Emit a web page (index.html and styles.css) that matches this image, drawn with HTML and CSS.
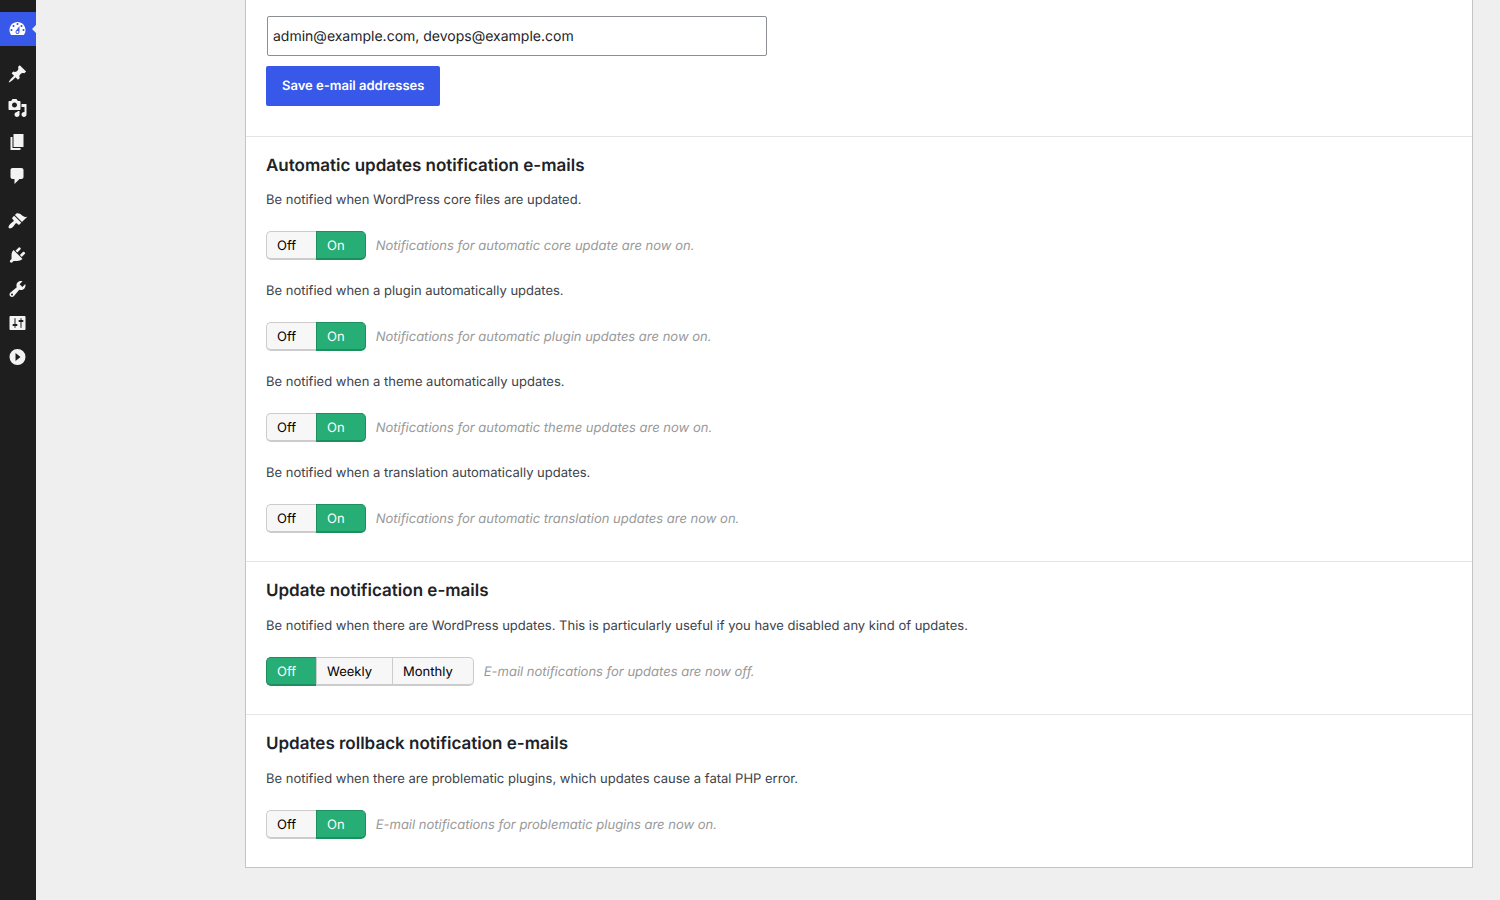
FILE: index.html
```
<!DOCTYPE html>
<html lang="en">
<head>
    <meta charset="UTF-8">
    <meta name="viewport" content="width=device-width, initial-scale=1.0">
    <title>Update notifications</title>
    <link rel="stylesheet" href="styles.css">
</head>
<body>

    <nav class="admin-menu" aria-label="Main menu">
        <a href="#" class="menu-item current" aria-label="Dashboard">
            <svg viewBox="0 0 20 20"><path d="M3.76 16h12.48c1.1-1.37 1.76-3.11 1.76-5 0-4.42-3.58-8-8-8s-8 3.58-8 8c0 1.89.66 3.63 1.76 5zM10 4c.55 0 1 .45 1 1s-.45 1-1 1-1-.45-1-1 .45-1 1-1zM6 6c.55 0 1 .45 1 1s-.45 1-1 1-1-.45-1-1 .45-1 1-1zm8 0c.55 0 1 .45 1 1s-.45 1-1 1-1-.45-1-1 .45-1 1-1zm-5.37 5.55L12 7v6c0 1.1-.9 2-2 2s-2-.9-2-2c0-.57.24-1.08.63-1.45zM4 10c.55 0 1 .45 1 1s-.45 1-1 1-1-.45-1-1 .45-1 1-1zm12 0c.55 0 1 .45 1 1s-.45 1-1 1-1-.45-1-1 .45-1 1-1zm-5 3c0-.55-.45-1-1-1s-1 .45-1 1 .45 1 1 1 1-.45 1-1z"/></svg>
        </a>
        <div class="menu-separator"></div>
        <a href="#" class="menu-item" aria-label="Posts">
            <svg viewBox="0 0 20 20"><path d="M10.44 3.02l1.82-1.82 6.36 6.35-1.83 1.82c-1.05-.68-2.48-.57-3.41.36l-.75.75c-.92.93-1.04 2.35-.35 3.41l-1.83 1.82-2.41-2.41-2.8 2.79c-.42.42-3.38 2.71-3.8 2.29s1.86-3.39 2.28-3.81l2.79-2.79L4.1 9.36l1.83-1.82c1.05.69 2.48.57 3.4-.36l.75-.75c.93-.92 1.05-2.35.36-3.41z"/></svg>
        </a>
        <a href="#" class="menu-item" aria-label="Media">
            <svg viewBox="0 0 20 20"><path d="M13 11V4c0-.55-.45-1-1-1h-1.67L9 1H5L3.67 3H2c-.55 0-1 .45-1 1v7c0 .55.45 1 1 1h10c.55 0 1-.45 1-1zM7 4.5c1.38 0 2.5 1.12 2.5 2.5S8.38 9.5 7 9.5 4.5 8.38 4.5 7 5.62 4.5 7 4.5zM14 6h5v10.5c0 1.38-1.12 2.5-2.5 2.5S14 17.88 14 16.5s1.12-2.5 2.5-2.5c.17 0 .34.02.5.05V9h-3V6zm-4 8.05V13h2v3.5c0 1.38-1.12 2.5-2.5 2.5S7 17.88 7 16.5 8.12 14 9.5 14c.17 0 .34.02.5.05z"/></svg>
        </a>
        <a href="#" class="menu-item" aria-label="Pages">
            <svg viewBox="0 0 20 20"><path d="M6 15V2h10v13H6zm-1 1h8v2H3V5h2v11z"/></svg>
        </a>
        <a href="#" class="menu-item" aria-label="Comments">
            <svg viewBox="0 0 20 20"><path d="M5 2h9c1.1 0 2 .9 2 2v7c0 1.1-.9 2-2 2h-2l-5 5v-5H5c-1.1 0-2-.9-2-2V4c0-1.1.9-2 2-2z"/></svg>
        </a>
        <div class="menu-separator"></div>
        <a href="#" class="menu-item" aria-label="Appearance">
            <svg viewBox="0 0 20 20"><path d="M14.48 11.06L7.41 3.99l1.5-1.5c.5-.56 2.3-.47 3.51.32 1.21.8 1.43 1.28 2.91 2.1 1.18.64 2.45 1.26 4.45.85zm-.71.71L6.7 4.7 4.93 6.47c-.39.39-.39 1.02 0 1.41l1.06 1.06c.39.39.39 1.03 0 1.42-.6.6-1.43 1.11-2.21 1.69-.35.26-.7.53-1.01.84C1.43 14.23.4 16.08 1.4 17.07c.99 1 2.84-.03 4.18-1.36.31-.31.58-.66.85-1.02.57-.78 1.08-1.61 1.69-2.21.39-.39 1.02-.39 1.41 0l1.06 1.06c.39.39 1.02.39 1.41 0z"/></svg>
        </a>
        <a href="#" class="menu-item" aria-label="Plugins">
            <svg viewBox="0 0 20 20"><path d="M13.11 4.36L9.87 7.6 8 5.73l3.24-3.24c.35-.34 1.05-.2 1.56.32.52.51.66 1.21.31 1.55zm-8 1.77l.91-1.12 9.01 9.01-1.19.84c-.71.71-2.63 1.16-3.82 1.16H6.14L4.9 17.26c-.59.59-1.54.59-2.12 0-.59-.58-.59-1.53 0-2.12l1.24-1.24v-3.88c0-1.13.4-3.19 1.09-3.89zm7.26 3.97l3.24-3.24c.34-.35 1.04-.21 1.55.31.52.51.66 1.21.31 1.55l-3.24 3.25z"/></svg>
        </a>
        <a href="#" class="menu-item" aria-label="Tools">
            <svg viewBox="0 0 20 20"><path d="M16.68 9.77c-1.34 1.34-3.3 1.67-4.95.99l-5.41 6.52c-.99.99-2.59.99-3.58 0s-.99-2.59 0-3.57l6.52-5.42c-.68-1.65-.35-3.61.99-4.95 1.28-1.28 3.12-1.62 4.72-1.06l-2.89 2.89 2.82 2.82 2.86-2.87c.53 1.58.18 3.39-1.08 4.65zM3.81 16.21c.4.39 1.04.39 1.43 0 .4-.4.4-1.04 0-1.43-.39-.4-1.03-.4-1.43 0-.39.39-.39 1.03 0 1.43z"/></svg>
        </a>
        <a href="#" class="menu-item" aria-label="Settings">
            <svg viewBox="0 0 20 20"><path d="M18 16V4c0-.55-.45-1-1-1H3c-.55 0-1 .45-1 1v12c0 .55.45 1 1 1h14c.55 0 1-.45 1-1zM8 11h1c.55 0 1 .45 1 1s-.45 1-1 1H8v1.5c0 .28-.22.5-.5.5s-.5-.22-.5-.5V13H6c-.55 0-1-.45-1-1s.45-1 1-1h1V5.5c0-.28.22-.5.5-.5s.5.22.5.5V11zm5-2h-1c-.55 0-1-.45-1-1s.45-1 1-1h1V5.5c0-.28.22-.5.5-.5s.5.22.5.5V7h1c.55 0 1 .45 1 1s-.45 1-1 1h-1v5.5c0 .28-.22.5-.5.5s-.5-.22-.5-.5V9z"/></svg>
        </a>
        <button type="button" class="menu-item" aria-label="Expand menu">
            <svg viewBox="0 0 20 20"><path fill-rule="evenodd" d="M10 2a8 8 0 1 0 0 16 8 8 0 0 0 0-16zM8 14V6l5 4z"/></svg>
        </button>
    </nav>

    <main class="content">
        <form class="panel">
            <section class="email-section">
                <input type="text" id="emails" class="email-input" aria-label="E-mail addresses" value="admin@example.com, devops@example.com">
                <button type="submit" class="save-btn">Save e-mail addresses</button>
            </section>

            <section class="section section-list">
                <h2>Automatic updates notification e-mails</h2>

                <p>Be notified when WordPress core files are updated.</p>
                <div class="option">
                    <div class="toggle" role="radiogroup" aria-label="Core update e-mails">
                        <input type="radio" name="core" id="core-off"><label for="core-off">Off</label>
                        <input type="radio" name="core" id="core-on" checked><label for="core-on">On</label>
                    </div>
                    <em>Notifications for automatic core update are now on.</em>
                </div>

                <p>Be notified when a plugin automatically updates.</p>
                <div class="option">
                    <div class="toggle" role="radiogroup" aria-label="Plugin update e-mails">
                        <input type="radio" name="plugin" id="plugin-off"><label for="plugin-off">Off</label>
                        <input type="radio" name="plugin" id="plugin-on" checked><label for="plugin-on">On</label>
                    </div>
                    <em>Notifications for automatic plugin updates are now on.</em>
                </div>

                <p>Be notified when a theme automatically updates.</p>
                <div class="option">
                    <div class="toggle" role="radiogroup" aria-label="Theme update e-mails">
                        <input type="radio" name="theme" id="theme-off"><label for="theme-off">Off</label>
                        <input type="radio" name="theme" id="theme-on" checked><label for="theme-on">On</label>
                    </div>
                    <em>Notifications for automatic theme updates are now on.</em>
                </div>

                <p>Be notified when a translation automatically updates.</p>
                <div class="option">
                    <div class="toggle" role="radiogroup" aria-label="Translation update e-mails">
                        <input type="radio" name="translation" id="translation-off"><label for="translation-off">Off</label>
                        <input type="radio" name="translation" id="translation-on" checked><label for="translation-on">On</label>
                    </div>
                    <em>Notifications for automatic translation updates are now on.</em>
                </div>
            </section>

            <section class="section">
                <h2>Update notification e-mails</h2>
                <p>Be notified when there are WordPress updates. This is particularly useful if you have disabled any kind of updates.</p>
                <div class="option">
                    <div class="toggle" role="radiogroup" aria-label="Update e-mails">
                        <input type="radio" name="updates" id="updates-off" checked><label for="updates-off">Off</label>
                        <input type="radio" name="updates" id="updates-weekly"><label for="updates-weekly">Weekly</label>
                        <input type="radio" name="updates" id="updates-monthly"><label for="updates-monthly">Monthly</label>
                    </div>
                    <em>E-mail notifications for updates are now off.</em>
                </div>
            </section>

            <section class="section">
                <h2>Updates rollback notification e-mails</h2>
                <p>Be notified when there are problematic plugins, which updates cause a fatal PHP error.</p>
                <div class="option">
                    <div class="toggle" role="radiogroup" aria-label="Rollback e-mails">
                        <input type="radio" name="rollback" id="rollback-off"><label for="rollback-off">Off</label>
                        <input type="radio" name="rollback" id="rollback-on" checked><label for="rollback-on">On</label>
                    </div>
                    <em>E-mail notifications for problematic plugins are now on.</em>
                </div>
            </section>
        </form>
    </main>

</body>
</html>
```
FILE: styles.css
```
* {
    box-sizing: border-box;
}

body {
    display: flex;
    min-height: 100vh;
    margin: 0;
    background-color: #efefef;
    color: #3c434a;
    font-family: Inter, "Liberation Sans", sans-serif;
    font-size: 13px;
    line-height: 20px;
    text-rendering: geometricPrecision;
}

/* Folded admin menu */
.admin-menu {
    display: flex;
    flex-direction: column;
    flex: none;
    width: 36px;
    padding-top: 12px;
    background-color: #1e1e1e;
}

.menu-item {
    display: flex;
    align-items: center;
    position: relative;
    height: 34px;
    padding: 0;
    border: 0;
    background: none;
    color: #f3f3f3;
    cursor: pointer;
}

.menu-item svg {
    width: 35px;
    height: 20px;
    fill: currentColor;
}

.menu-item.current {
    background-color: #3858e9;
    color: #fff;
}

.menu-item.current::after {
    content: "";
    position: absolute;
    right: 0;
    top: 13px;
    border: 4px solid transparent;
    border-left: 0;
    border-right-color: #efefef;
}

.menu-separator {
    height: 11px;
}

/* Settings panel */
.content {
    flex: 1;
    padding: 0 27px 32px 209px;
}

.panel {
    border: 1px solid #c3c4c7;
    border-top: 0;
    background-color: #fff;
}

.email-section {
    display: flex;
    flex-direction: column;
    align-items: flex-start;
    gap: 10px;
    padding: 16px 20px 30px;
}

.email-input {
    width: 100%;
    max-width: 500px;
    height: 40px;
    margin: 0 1px;
    padding: 0 5px;
    border: 1px solid #8c8f94;
    border-radius: 2px;
    background-color: #fff;
    color: #1d2327;
    font: inherit;
    font-size: 14px;
    text-rendering: inherit;
}

.save-btn {
    height: 40px;
    padding: 0 16px;
    border: 0;
    border-radius: 2px;
    background-color: #3858e9;
    color: #fff;
    font: inherit;
    font-weight: 600;
    text-rendering: inherit;
    cursor: pointer;
}

.section {
    padding: 17px 20px 28px;
    border-top: 1px solid #e5e5e5;
}

.section h2 {
    margin: 0 0 13px;
    color: #1d2327;
    font-size: 17px;
    font-weight: 600;
    line-height: 24px;
}

.section-list h2 {
    margin-bottom: 12px;
}

.section p {
    margin: 0 0 21px;
}

.option {
    display: flex;
    align-items: baseline;
    gap: 10px;
}

.option + p {
    margin-top: 21px;
}

.option em {
    color: #999;
}

/* Off / On switch */
.toggle {
    display: flex;
}

.toggle input {
    position: absolute;
    opacity: 0;
}

.toggle label {
    height: 29px;
    padding: 4px 20px 2px 10px;
    border: solid #ccc;
    border-width: 1px 0 2px 1px;
    background-color: #f7f7f7;
    color: #000;
    cursor: pointer;
}

.toggle label:first-of-type {
    border-radius: 5px 0 0 5px;
}

.toggle label:last-of-type {
    border-right-width: 1px;
    border-radius: 0 5px 5px 0;
}

.toggle input:checked + label {
    border-color: #1d8f5c;
    background-color: #27ae77;
    color: #fff;
}

.toggle input:focus-visible + label {
    outline: 2px solid #3858e9;
}
```
